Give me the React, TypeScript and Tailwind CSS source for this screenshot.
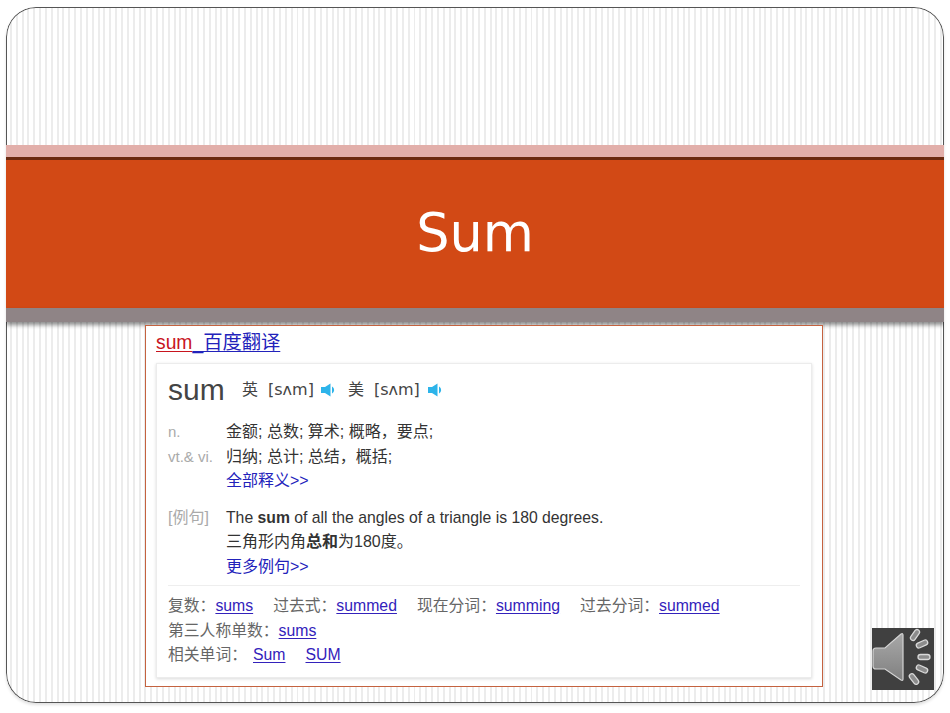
const cjk = "font-['Liberation_Sans','Noto_Sans_CJK_SC',sans-serif]";

function SmallHorn() {
  return (
    <svg width="15" height="16" viewBox="0 0 15 16" className="shrink-0">
      <path d="M0 5h4L9.500 1.500v13L4 11H0z" fill="#2db4ea" />
      <path d="M11 4.500c2.800 1.500 2.800 5.500 0 7z" fill="#2db4ea" />
    </svg>
  );
}

function SpeakerBadge() {
  return (
    <div className="absolute left-[866px] top-[621px] h-[62px] w-[62px] bg-[#404040]">
      <svg width="62" height="62" viewBox="0 0 62 62">
        <defs>
          <linearGradient id="horn" x1="0" y1="0" x2="0" y2="1">
            <stop offset="0" stopColor="#a8a8a8" />
            <stop offset="1" stopColor="#808080" />
          </linearGradient>
        </defs>
        <path
          d="M4 20h9L29 6q2-1 2 1v44q0 2-2 1L13 41H4q-3 0-3-3V23q0-3 3-3z"
          fill="url(#horn)"
          stroke="#d4d4d4"
          strokeWidth="1.2"
        />
        <g fill="#8c8c8c" stroke="#d8d8d8" strokeWidth="1.3">
          <rect x="37" y="4.500" width="12" height="5" rx="2.500" transform="rotate(-55 43 7)" />
          <rect x="44" y="13.500" width="12" height="5" rx="2.500" transform="rotate(-25 50 16)" />
          <rect x="46" y="26.500" width="12" height="5" rx="2.500" />
          <rect x="44" y="38.500" width="12" height="5" rx="2.500" transform="rotate(25 50 41)" />
          <rect x="36" y="48.500" width="12" height="5" rx="2.500" transform="rotate(52 42 51)" />
        </g>
      </svg>
    </div>
  );
}

export default function App() {
  const link = "text-[#3322bb] underline underline-offset-2";

  return (
    <div className={`h-[713px] w-[950px] overflow-hidden bg-white pl-[6px] pt-[7px] ${cjk}`}>
      <div className="relative h-[696px] w-[938px] overflow-hidden rounded-[30px] bg-white bg-[repeating-linear-gradient(90deg,#fff_0px,#fff_3.85px,#ececec_3.85px,#ececec_5.85px)] shadow-[inset_0_0_0_1px_#555,0_2px_3px_rgba(0,0,0,0.12)]">
        {/* title band */}
        <div className="mt-[138px] h-[12px] bg-[#e2afaa]" />
        <div className="h-[3px] bg-[#6b2a10]" />
        <div className="flex h-[148px] items-center justify-center bg-[#d24915] pb-[2px] font-['DejaVu_Sans',sans-serif] text-[52.500px] text-white">
          Sum
        </div>
        <div className="h-[14px] bg-[#8f8486] shadow-[0_3px_4px_rgba(0,0,0,0.45)]" />

        {/* dictionary screenshot */}
        <div className="ml-[139px] mt-[3px] h-[362px] w-[678px] border border-[#c4623f] bg-white px-[10px] pt-[5px]">
          <div className="text-[19.300px] leading-[24px]">
            <span className="text-[#c8141e] underline underline-offset-2">sum</span>
            <span className="text-[#2222bb] underline underline-offset-2">_百度翻译</span>
          </div>
          <div className="mt-[8px] h-[315px] w-[656px] border border-[#ececec] px-[11px] pt-[8px] shadow-[0_1px_3px_rgba(0,0,0,0.15)]">
            <div className="flex h-[36px] items-center text-[#444]">
              <span className="w-[74px] text-[30px] leading-[36px]">sum</span>
              <span className="text-[16px]">英</span>
              <span className="ml-[10px] font-['DejaVu_Sans',sans-serif] text-[16px]">[sʌm]</span>
              <span className="ml-[7px]"><SmallHorn /></span>
              <span className="ml-[12px] text-[16px]">美</span>
              <span className="ml-[10px] font-['DejaVu_Sans',sans-serif] text-[16px]">[sʌm]</span>
              <span className="ml-[8px]"><SmallHorn /></span>
            </div>

            <div className="mt-[12px] text-[16px] leading-[24.500px] text-[#333]">
              <div className="flex">
                <span className="w-[58px] text-[15px] text-[#aaa]">n.</span>
                <span>金额; 总数; 算术; 概略，要点;</span>
              </div>
              <div className="flex">
                <span className="w-[58px] text-[15px] text-[#aaa]">vt.&amp; vi.</span>
                <span>归纳; 总计; 总结，概括;</span>
              </div>
              <div className="pl-[58px] text-[#2222bb]">全部释义&gt;&gt;</div>

              <div className="mt-[12px] flex">
                <span className="w-[58px] text-[#aaa]">[例句]</span>
                <span className="text-[15.750px]">
                  The <b>sum</b> of all the angles of a triangle is 180 degrees.
                </span>
              </div>
              <div className="pl-[58px]">三角形内角<b>总和</b>为180度。</div>
              <div className="pl-[58px] text-[#2222bb]">更多例句&gt;&gt;</div>
            </div>

            <div className="mt-[6px] border-t border-[#eee] pt-[8px] text-[15.800px] leading-[24.500px] text-[#666]">
              <div className="flex">
                <span>复数：</span><span className={link}>sums</span>
                <span className="ml-[20px]">过去式：</span><span className={link}>summed</span>
                <span className="ml-[20px]">现在分词：</span><span className={link}>summing</span>
                <span className="ml-[20px]">过去分词：</span><span className={link}>summed</span>
              </div>
              <div className="flex">
                <span>第三人称单数：</span><span className={link}>sums</span>
              </div>
              <div className="flex">
                <span className="mr-[6px]">相关单词：</span><span className={link}>Sum</span>
                <span className={`ml-[20px] ${link}`}>SUM</span>
              </div>
            </div>
          </div>
        </div>

        <SpeakerBadge />
      </div>
    </div>
  );
}
